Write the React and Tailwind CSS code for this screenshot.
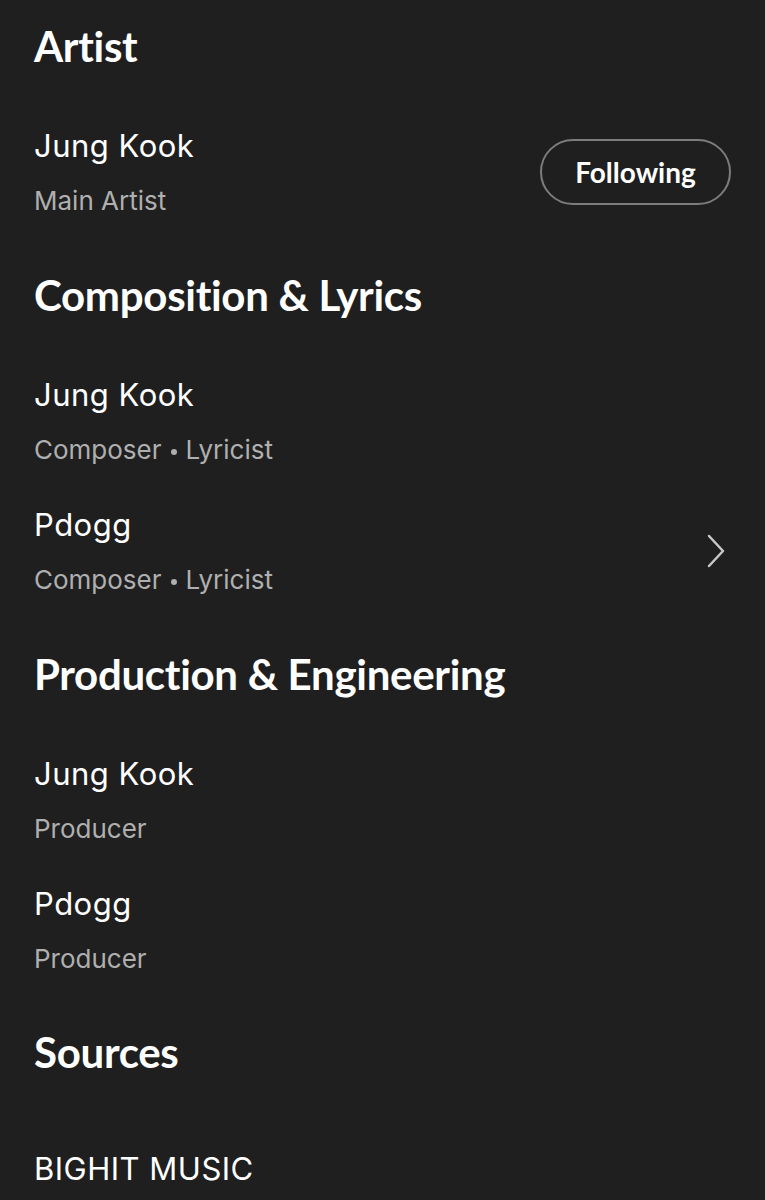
import React from "react";

const BODY = { fontFamily: "Inter, 'Noto Sans', sans-serif" };

function Heading({ children, className = "" }) {
  return (
    <h2
      style={{ fontFamily: "Lato, 'Noto Sans', sans-serif" }}
      className={`text-[42px] font-bold leading-[42px] tracking-[-0.3px] text-white ${className}`}
    >
      {children}
    </h2>
  );
}

function Person({ name, role, right, className = "" }) {
  return (
    <div className={`flex items-center justify-between ${className}`}>
      <div className="flex flex-col">
        <div className="text-[31px] leading-[31px] tracking-[0.5px] text-white">{name}</div>
        <div className="mt-[27px] h-[26px] text-[26px] leading-[26px] text-[#afafaf]">{role}</div>
      </div>
      {right}
    </div>
  );
}

function Roles({ a, b }) {
  return (
    <>
      {a}
      <span className="mx-[9px] inline-block h-[6px] w-[6px] rounded-full bg-[#afafaf] align-middle" />
      {b}
    </>
  );
}

function Chevron() {
  return (
    <svg width="24" height="36" viewBox="0 0 24 36" className="mr-[3px]">
      <path d="M5 3 L19 18 L5 33" fill="none" stroke="#c8c8c8" strokeWidth="2.5" strokeLinecap="round" strokeLinejoin="round" />
    </svg>
  );
}

export default function App() {
  return (
    <div style={BODY} className="min-h-[1200px] w-[765px] overflow-hidden bg-[#1f1f1f] pl-[34px] pr-[34px] pt-[25px]">
      <Heading>Artist</Heading>
      <Person
        className="mt-[63px]"
        name="Jung Kook"
        role="Main Artist"
        right={
          <button
            style={{ fontFamily: "Lato, 'Noto Sans', sans-serif" }}
            className="flex h-[66px] w-[191px] items-center justify-center rounded-full border-2 border-[#7c7c7c] text-[28px] font-bold text-white"
          >
            Following
          </button>
        }
      />
      <Heading className="mt-[60px]">Composition &amp; Lyrics</Heading>
      <Person className="mt-[63px]" name="Jung Kook" role={<Roles a="Composer" b="Lyricist" />} />
      <Person className="mt-[46px]" name="Pdogg" role={<Roles a="Composer" b="Lyricist" />} right={<Chevron />} />
      <Heading className="mt-[60px]">Production &amp; Engineering</Heading>
      <Person className="mt-[63px]" name="Jung Kook" role="Producer" />
      <Person className="mt-[46px]" name="Pdogg" role="Producer" />
      <Heading className="mt-[59px]">Sources</Heading>
      <div className="mt-[80px] text-[31px] leading-[31px] tracking-[0.5px] text-white">BIGHIT MUSIC</div>
    </div>
  );
}
